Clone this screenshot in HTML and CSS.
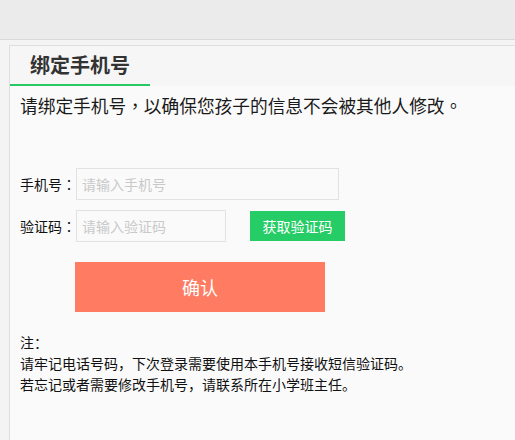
FILE: index.html
```html
<!DOCTYPE html>
<html lang="zh-CN">
<head>
<meta charset="utf-8">
<title>绑定手机号</title>
<link rel="stylesheet" href="styles.css">
</head>
<body>
<div class="topbar"></div>
<div class="page">
  <div class="card">
    <div class="card-head">
      <div class="tab">绑定手机号</div>
    </div>
    <div class="content">
      <p class="intro" lang="zh-Hant">请绑定手机号，以确保您孩子的信息不会被其他人修改。</p>
      <form class="form">
        <div class="row">
          <label class="label" lang="zh-Hant">手机号：</label>
          <input class="input input-wide" type="text" placeholder="请输入手机号">
        </div>
        <div class="row">
          <label class="label" lang="zh-Hant">验证码：</label>
          <input class="input input-short" type="text" placeholder="请输入验证码">
          <button type="button" class="btn-code">获取验证码</button>
        </div>
        <button type="button" class="btn-confirm">确认</button>
      </form>
      <div class="notes">
        <div>注：</div>
        <div>请牢记电话号码，下次登录需要使用本手机号接收短信验证码。</div>
        <div>若忘记或者需要修改手机号，请联系所在小学班主任。</div>
      </div>
    </div>
  </div>
</div>
</body>
</html>
```
FILE: styles.css
```css
html, body {
  margin: 0;
  padding: 0;
  height: 100%;
}
body {
  background: #f4f4f4;
  font-family: "Noto Sans CJK SC", "Noto Sans", sans-serif;
  color: #222;
  overflow: hidden;
}
.topbar {
  height: 39px;
  background: #ebebeb;
  border-bottom: 1px solid #d9d9d9;
}
.page {
  padding: 5px 0 0 9px;
  height: 400px;
  box-sizing: border-box;
}
.card {
  background: #fafafa;
  border-left: 1px solid #dedede;
  border-top: 1px solid #dedede;
  height: 100%;
}
.card-head {
  background: #f6f6f6;
  height: 40px;
}
.tab {
  width: 120px;
  height: 38px;
  line-height: 38px;
  padding-left: 20px;
  border-bottom: 2px solid #26c962;
  font-size: 20px;
  font-weight: bold;
  color: #333;
}
.content {
  padding: 0 10px;
}
.intro {
  margin: 7px 0 0;
  font-family: "Noto Sans CJK TC", "Noto Sans CJK SC", sans-serif;
  font-size: 17.7px;
  line-height: 25px;
  color: #1a1a1a;
}
.form {
  margin-top: 50px;
  display: flex;
  flex-direction: column;
  gap: 10px;
}
.row {
  display: flex;
  align-items: center;
}
.label {
  width: 56px;
  font-family: "Noto Sans CJK TC", "Noto Sans CJK SC", sans-serif;
  font-size: 14px;
  color: #111;
}
.input {
  height: 32px;
  box-sizing: border-box;
  border: 1px solid #e2e2e2;
  background: #fafafa;
  padding: 0 5px;
  font-family: "Noto Sans CJK SC", sans-serif;
  font-size: 14px;
  outline: none;
}
.input::placeholder {
  color: #c9c9c9;
}
.input-wide {
  width: 263px;
}
.input-short {
  width: 150px;
}
.btn-code {
  margin-left: 24px;
  width: 95px;
  height: 30px;
  border: 0;
  background: #26cc66;
  color: #fff;
  font-family: inherit;
  font-size: 14px;
  padding: 0;
}
.btn-confirm {
  margin: 10px 0 0 55px;
  width: 250px;
  height: 50px;
  border: 0;
  background: #ff7b62;
  color: #fff;
  font-family: inherit;
  font-size: 18px;
  padding: 0;
}
.notes {
  margin: 20px 0 0;
  font-size: 14px;
  line-height: 21px;
  color: #111;
}
```
